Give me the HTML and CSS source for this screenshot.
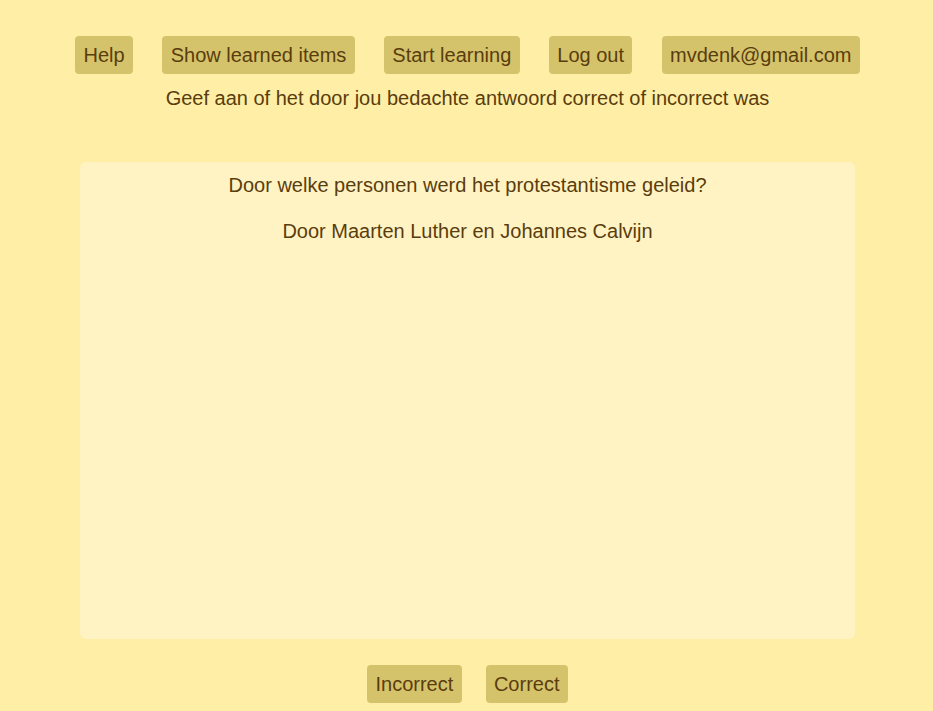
FILE: index.html
```html
<!DOCTYPE html>
<html>
<head>
<meta charset="utf-8">
<link rel="stylesheet" href="styles.css">
</head>
<body>
<div class="page">
  <nav class="nav">
    <span class="btn">Help</span>
    <span class="btn">Show learned items</span>
    <span class="btn">Start learning</span>
    <span class="btn">Log out</span>
    <span class="btn">mvdenk@gmail.com</span>
  </nav>
  <div class="subtitle">Geef aan of het door jou bedachte antwoord correct of incorrect was</div>
  <div class="card">
    <p class="q">Door welke personen werd het protestantisme geleid?</p>
    <p class="a">Door Maarten Luther en Johannes Calvijn</p>
  </div>
  <div class="actions">
    <span class="btn">Incorrect</span>
    <span class="btn">Correct</span>
  </div>
</div>
</body>
</html>
```
FILE: styles.css
```css
html, body {
  margin: 0;
  padding: 0;
  background: #ffefa6;
}
body {
  font-family: "Liberation Sans", Arial, sans-serif;
  font-size: 20px;
  color: #5a3d0d;
  height: 711px;
  overflow: hidden;
}
.page {
  width: 775px;
  margin: 0 auto;
  padding-top: 36px;
  display: flex;
  flex-direction: column;
  align-items: center;
  transform: translateX(1px);
}
.nav {
  display: flex;
  justify-content: center;
  gap: 29.4px;
}
.btn {
  display: inline-block;
  background: #d4c36b;
  border-radius: 4px;
  padding: 8px 8.3px 7px;
  line-height: 23px;
  white-space: nowrap;
}
.subtitle {
  margin-top: 13px;
  line-height: 23px;
}
.card {
  margin-top: 52px;
  width: 775px;
  height: 477px;
  box-sizing: border-box;
  background: #fff3c4;
  border-radius: 6px;
  padding-top: 12px;
  text-align: center;
}
.card p {
  margin: 0;
  line-height: 23px;
}
.card .a {
  margin-top: 23px;
}
.actions {
  margin-top: 26px;
  display: flex;
  gap: 24px;
}
```
